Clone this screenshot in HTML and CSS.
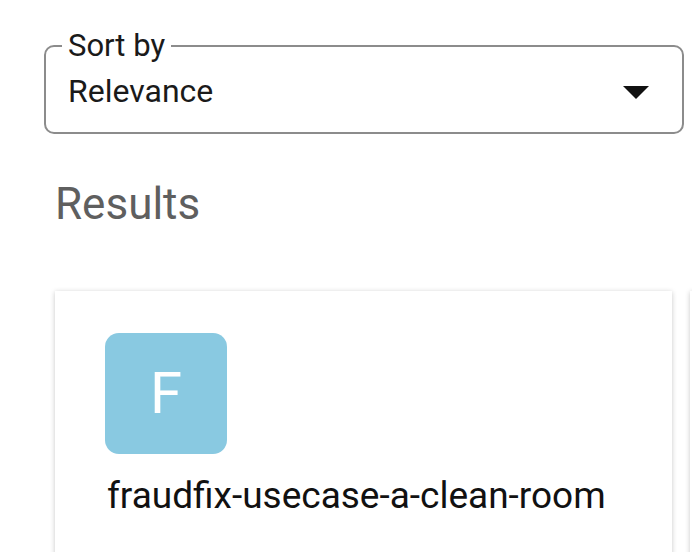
FILE: index.html
```html
<!DOCTYPE html>
<html>
<head>
<meta charset="utf-8">
<link rel="stylesheet" href="styles.css">
</head>
<body>
<div class="page">
  <fieldset class="sort">
    <legend class="sort-label">Sort by</legend>
    <div class="sort-row">
      <span class="sort-value">Relevance</span>
      <span class="caret"></span>
    </div>
  </fieldset>
  <h2 class="results-title">Results</h2>
  <div class="cards">
    <div class="card">
      <div class="avatar">F</div>
      <div class="card-name">fraudfix-usecase-a-clean-room</div>
    </div>
    <div class="card card-next"></div>
  </div>
</div>
</body>
</html>
```

FILE: styles.css
```css
html, body {
  margin: 0;
  padding: 0;
  background: #ffffff;
  overflow: hidden;
  height: 552px;
}
.page {
  font-family: Roboto, "Liberation Sans", sans-serif;
  color: #1f1f1f;
  padding: 0 8px 0 44px;
}
.sort {
  margin: 28px 0 0 0;
  padding: 8px 33px 22px 16px;
  border: 2px solid #8c8c8c;
  border-radius: 10px;
  min-width: 0;
}
.sort-label {
  font-size: 31px;
  line-height: 36px;
  padding: 0 6px;
  margin-left: 0;
  color: #1a1a1a;
}
.sort-row {
  display: flex;
  align-items: center;
  justify-content: space-between;
  padding-left: 6px;
}
.sort-value {
  font-size: 32px;
  line-height: 38px;
  color: #1a1a1a;
}
.caret {
  width: 0;
  height: 0;
  border-left: 13px solid transparent;
  border-right: 13px solid transparent;
  border-top: 13px solid #111;
  margin-top: 2px;
}
.results-title {
  margin: 44px 0 0 11px;
  font-size: 44px;
  line-height: 52px;
  font-weight: 400;
  color: #5f5f5f;
}
.cards {
  display: flex;
  gap: 18px;
  margin: 61px 0 0 11px;
}
.card {
  flex: 0 0 617px;
  height: 320px;
  background: #fff;
  box-shadow: 0 1px 5px rgba(0, 0, 0, 0.22);
  padding: 42px 0 0 50px;
  box-sizing: border-box;
}
.card-next {
  flex: 0 0 200px;
}
.avatar {
  width: 122px;
  height: 121px;
  border-radius: 14px;
  background: #89c9e1;
  color: #fff;
  font-size: 58px;
  line-height: 121px;
  text-align: center;
}
.card-name {
  margin-top: 20px;
  font-size: 37px;
  line-height: 44px;
  color: #111;
  margin-left: 2px;
}
```
